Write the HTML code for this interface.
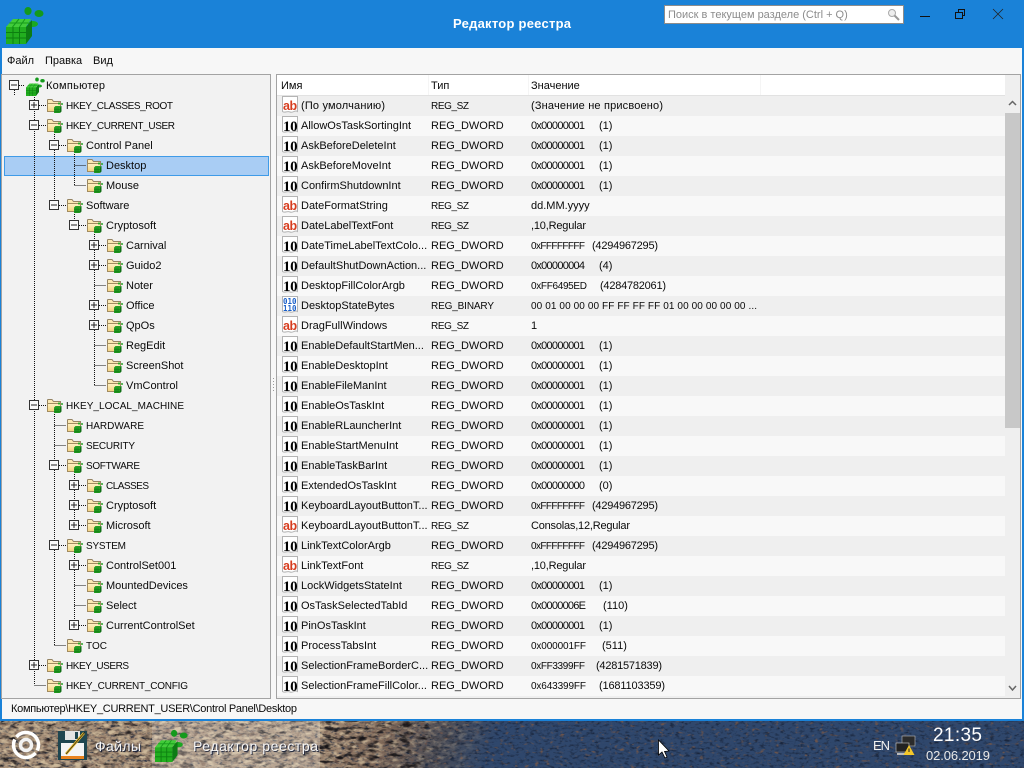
<!DOCTYPE html>
<html lang="ru"><head><meta charset="utf-8"><title>Редактор реестра</title>
<style>
html,body{margin:0;padding:0;width:1024px;height:768px;overflow:hidden;background:#33465f}
svg{display:block;position:absolute;left:0;top:0}
text{font-family:"Liberation Sans",sans-serif;font-size:11px;fill:#0a0a0a}
text.u{font-size:10px}
text.d{font-family:"Liberation Serif",serif;font-size:15px;font-weight:bold;fill:#000;letter-spacing:-.4px}
text.a{font-size:12.500px;font-weight:bold;fill:#d63c1e;letter-spacing:-.4px}
text.b{font-family:"DejaVu Sans Mono",monospace;font-size:7.500px;font-weight:bold;fill:#1a5fc8}
text.t{fill:#f6f6f6;font-size:14px;filter:drop-shadow(1px 1px 0 rgba(15,25,50,.8))}
.dot{stroke:#111;stroke-width:1;stroke-dasharray:1 1;fill:none;shape-rendering:crispEdges}
</style></head><body>
<svg width="1024" height="768" viewBox="0 0 1024 768" xmlns="http://www.w3.org/2000/svg">
<defs>
<linearGradient id="wp" gradientUnits="userSpaceOnUse" x1="320" y1="710" x2="480" y2="775">
<stop offset="0" stop-color="#a68f78"/><stop offset=".4" stop-color="#806a5a"/><stop offset=".72" stop-color="#4a4c56"/><stop offset="1" stop-color="#2f476c"/>
</linearGradient>
<linearGradient id="mg" gradientUnits="userSpaceOnUse" x1="320" y1="710" x2="480" y2="775">
<stop offset="0" stop-color="#fff"/><stop offset=".6" stop-color="#888"/><stop offset="1" stop-color="#000"/>
</linearGradient>
<mask id="mk" maskUnits="userSpaceOnUse" x="0" y="720" width="1024" height="48"><rect y="720" width="1024" height="48" fill="url(#mg)"/></mask>
<filter id="n" x="0" y="0" width="100%" height="100%" color-interpolation-filters="sRGB"><feTurbulence type="fractalNoise" baseFrequency=".09 .22" numOctaves="3" seed="7"/><feColorMatrix values="0 0 0 0 .09  0 0 0 0 .08  0 0 0 0 .09  2.4 2.4 0 0 -2.45"/></filter>
<filter id="n2" x="0" y="0" width="100%" height="100%" color-interpolation-filters="sRGB"><feTurbulence type="fractalNoise" baseFrequency=".12 .25" numOctaves="3" seed="21"/><feColorMatrix values="0 0 0 0 .8  0 0 0 0 .72  0 0 0 0 .6  2.6 2.6 0 0 -2.5"/></filter>
<filter id="n3" x="0" y="0" width="100%" height="100%" color-interpolation-filters="sRGB"><feTurbulence type="fractalNoise" baseFrequency=".14 .3" numOctaves="3" seed="33"/><feColorMatrix values="0 0 0 0 .45  0 0 0 0 .35  0 0 0 0 .29  2 2 0 0 -2.1"/></filter>
<filter id="n4" x="0" y="0" width="100%" height="100%" color-interpolation-filters="sRGB"><feTurbulence type="fractalNoise" baseFrequency=".2 .4" numOctaves="3" seed="5"/><feColorMatrix values="0 0 0 0 .1  0 0 0 0 .15  0 0 0 0 .24  2 2 0 0 -2"/></filter>
<filter id="n5" x="0" y="0" width="100%" height="100%" color-interpolation-filters="sRGB"><feTurbulence type="fractalNoise" baseFrequency=".2 .35" numOctaves="2" seed="13"/><feColorMatrix values="0 0 0 0 .42  0 0 0 0 .33  0 0 0 0 .3  2.6 2.6 0 0 -3"/></filter>
<linearGradient id="fd" x1="0" y1="0" x2="0" y2="1"><stop offset="0" stop-color="#fff2c6"/><stop offset="1" stop-color="#f5d27e"/></linearGradient>
<symbol id="f" viewBox="0 0 16 16" width="16" height="16">
<path d="M.5 3V14.500H13.500V4.500H6.500L5 2.500H1Z" fill="#fbe9b4" stroke="#958463"/>
<path d="M.5 14.500V6.500H13.500V14.500Z" fill="url(#fd)" stroke="#a28c60"/>
<path d="M7 10.500L8.500 9H14.500L13 10.500V16H7Z" fill="#27a025"/>
<path d="M13 10.500L14.500 9V14.500L13 16Z" fill="#0f6f14"/>
<path d="M7 12.500H13M7 14.500H13M9 10.500V16M11 10.500V16" stroke="#0f7a12" stroke-width=".6"/>
<circle cx="12" cy="6.500" r="1.100" fill="#2aa52a"/><circle cx="15" cy="7" r="1" fill="#2aa52a"/>
</symbol>
<symbol id="c" viewBox="6 6 38 38" width="38" height="38">
<ellipse cx="28" cy="11" rx="3.600" ry="4" fill="#149a1c"/><ellipse cx="39" cy="13.500" rx="4.500" ry="3.500" fill="#149a1c"/><ellipse cx="33" cy="24" rx="5" ry="3" fill="#1aa822"/>
<path d="M6 27L13 19H31L26 27Z" fill="#42cc3a"/>
<path d="M12.500 27L19 19M19.500 27L25 19M9.500 23H28.500" stroke="#159a1b" stroke-width="1"/>
<rect x="6" y="27" width="20" height="17" fill="#22ae1f"/>
<path d="M26 27L32 20V36L26 44Z" fill="#0d7c14"/>
<path d="M13 27V44M19.500 27V44M6 32.500H26M6 38H26" stroke="#0c7f10" stroke-width="1"/>
</symbol>
<symbol id="p" viewBox="0 0 16 18" width="16" height="18">
<path d="M.5 .5H15.500V15.500C13 13.500 11 17.500 8 16C5 14.500 3 17.500 .5 15.500Z" fill="#fff" stroke="#b4b4b4"/>
</symbol>
<symbol id="pl" viewBox="0 0 10 10" width="10" height="10"><rect x=".5" y=".5" width="9" height="9" fill="#fafafa" stroke="#333"/><path d="M2 5H8M5 2V8" stroke="#222"/></symbol>
<symbol id="mi" viewBox="0 0 10 10" width="10" height="10"><rect x=".5" y=".5" width="9" height="9" fill="#fafafa" stroke="#333"/><path d="M2 5H8" stroke="#222"/></symbol>
</defs>

<!-- wallpaper -->
<rect y="720" width="1024" height="48" fill="url(#wp)"/>
<rect y="720" width="1024" height="48" filter="url(#n4)"/>
<rect y="720" width="1024" height="48" filter="url(#n5)"/>
<g mask="url(#mk)"><rect y="720" width="1024" height="48" filter="url(#n3)"/><rect y="720" width="1024" height="48" filter="url(#n)"/><rect y="720" width="1024" height="48" filter="url(#n2)"/></g>
<rect x="320" y="720" width="110" height="48" filter="url(#n)"/>
<!-- window -->
<rect width="1024" height="721" fill="#1a82d8"/>
<rect x="2" y="48" width="1020" height="671" fill="#f7f7f7"/>
<use href="#c" x="6" y="6"/>
<text x="453" y="28" textLength="118" style="font-size:13px;font-weight:bold;fill:#fff">Редактор реестра</text>
<rect x="664.500" y="5.500" width="239" height="18" fill="#fff" stroke="#8c8c8c"/>
<text x="668" y="18" style="fill:#8c8c8c">Поиск в текущем разделе (Ctrl + Q)</text>
<circle cx="892" cy="13" r="3.500" fill="#eee" stroke="#aaa"/><path d="M894.500 15.500L899 20" stroke="#999" stroke-width="2"/>
<path d="M920 16.500H930" stroke="#111"/>
<path d="M955.500 12.500H962.500V18.500H955.500ZM958.500 12V9.500H964.500V15.500H963" fill="none" stroke="#111"/>
<path d="M993 9L1003 19M1003 9L993 19" stroke="#222" stroke-width=".8"/>
<text x="7" y="64">Файл</text><text x="45" y="64">Правка</text><text x="93" y="64">Вид</text>

<!-- tree panel -->
<rect x="1.500" y="74.500" width="269" height="624" fill="#f2f2f2" stroke="#a3a3a3"/>
<rect x="4.500" y="156.500" width="264" height="19" fill="#a9cdf4" stroke="#3f9be8"/>
<path class="dot" d="M14.500 90V95M19 85.500H25M34.500 95V685M39 105.500H46M39 125.500H46M39 405.500H46M39 665.500H46M34.500 685.500H46M54.500 130V205M59 145.500H66M59 205.500H66M74.500 150V185M74.500 165.500H86M74.500 185.500H86M74.500 210V225M79 225.500H86M94.500 230V385M99 245.500H106M99 265.500H106M94.500 285.500H106M99 305.500H106M99 325.500H106M94.500 345.500H106M94.500 365.500H106M94.500 385.500H106M54.500 410V645M54.500 425.500H66M54.500 445.500H66M59 465.500H66M59 545.500H66M54.500 645.500H66M74.500 470V525M79 485.500H86M79 505.500H86M79 525.500H86M74.500 550V625M79 565.500H86M74.500 585.500H86M74.500 605.500H86M79 625.500H86"/>
<use href="#mi" x="9" y="80"/>
<use href="#c" x="26" y="77" width="19" height="19"/><text x="46" y="89" textLength="59">Компьютер</text>
<use href="#pl" x="29" y="100"/><use href="#f" x="47" y="97"/><text class="u" x="66" y="109" textLength="107">HKEY_CLASSES_ROOT</text>
<use href="#mi" x="29" y="120"/><use href="#f" x="47" y="117"/><text class="u" x="66" y="129" textLength="109">HKEY_CURRENT_USER</text>
<use href="#mi" x="49" y="140"/><use href="#f" x="67" y="137"/><text x="86" y="149">Control Panel</text>
<use href="#f" x="87" y="157"/><text x="106" y="169">Desktop</text>
<use href="#f" x="87" y="177"/><text x="106" y="189">Mouse</text>
<use href="#mi" x="49" y="200"/><use href="#f" x="67" y="197"/><text x="86" y="209">Software</text>
<use href="#mi" x="69" y="220"/><use href="#f" x="87" y="217"/><text x="106" y="229">Cryptosoft</text>
<use href="#pl" x="89" y="240"/><use href="#f" x="107" y="237"/><text x="126" y="249">Carnival</text>
<use href="#pl" x="89" y="260"/><use href="#f" x="107" y="257"/><text x="126" y="269">Guido2</text>
<use href="#f" x="107" y="277"/><text x="126" y="289">Noter</text>
<use href="#pl" x="89" y="300"/><use href="#f" x="107" y="297"/><text x="126" y="309">Office</text>
<use href="#pl" x="89" y="320"/><use href="#f" x="107" y="317"/><text x="126" y="329">QpOs</text>
<use href="#f" x="107" y="337"/><text x="126" y="349">RegEdit</text>
<use href="#f" x="107" y="357"/><text x="126" y="369">ScreenShot</text>
<use href="#f" x="107" y="377"/><text x="126" y="389">VmControl</text>
<use href="#mi" x="29" y="400"/><use href="#f" x="47" y="397"/><text class="u" x="66" y="409" textLength="118">HKEY_LOCAL_MACHINE</text>
<use href="#f" x="67" y="417"/><text class="u" x="86" y="429" textLength="58">HARDWARE</text>
<use href="#f" x="67" y="437"/><text class="u" x="86" y="449" textLength="49">SECURITY</text>
<use href="#mi" x="49" y="460"/><use href="#f" x="67" y="457"/><text class="u" x="86" y="469" textLength="54">SOFTWARE</text>
<use href="#pl" x="69" y="480"/><use href="#f" x="87" y="477"/><text class="u" x="106" y="489" textLength="43">CLASSES</text>
<use href="#pl" x="69" y="500"/><use href="#f" x="87" y="497"/><text x="106" y="509">Cryptosoft</text>
<use href="#pl" x="69" y="520"/><use href="#f" x="87" y="517"/><text x="106" y="529">Microsoft</text>
<use href="#mi" x="49" y="540"/><use href="#f" x="67" y="537"/><text class="u" x="86" y="549" textLength="40">SYSTEM</text>
<use href="#pl" x="69" y="560"/><use href="#f" x="87" y="557"/><text x="106" y="569">ControlSet001</text>
<use href="#f" x="87" y="577"/><text x="106" y="589">MountedDevices</text>
<use href="#f" x="87" y="597"/><text x="106" y="609">Select</text>
<use href="#pl" x="69" y="620"/><use href="#f" x="87" y="617"/><text x="106" y="629">CurrentControlSet</text>
<use href="#f" x="67" y="637"/><text class="u" x="86" y="649" textLength="21">TOC</text>
<use href="#pl" x="29" y="660"/><use href="#f" x="47" y="657"/><text class="u" x="66" y="669" textLength="63">HKEY_USERS</text>
<use href="#f" x="47" y="677"/><text class="u" x="66" y="689" textLength="122">HKEY_CURRENT_CONFIG</text>

<!-- splitter -->
<path d="M273.500 378V392" stroke="#999" stroke-dasharray="1 2"/>

<!-- list panel -->
<rect x="276.500" y="74.500" width="744" height="624" fill="#efefef" stroke="#a3a3a3"/>
<rect x="277" y="75" width="728" height="20" fill="#fff"/>
<path d="M277 95.500H1005" stroke="#e2e2e2"/><path d="M428.500 75V95M528.500 75V95M760.500 75V95" stroke="#f5f5f5"/>
<text x="281" y="89">Имя</text><text x="431" y="89">Тип</text><text x="531" y="89">Значение</text>
<g fill="#f8f8f8"><rect x="277" y="116" width="728" height="20"/><rect x="277" y="156" width="728" height="20"/><rect x="277" y="196" width="728" height="20"/><rect x="277" y="236" width="728" height="20"/><rect x="277" y="276" width="728" height="20"/><rect x="277" y="316" width="728" height="20"/><rect x="277" y="356" width="728" height="20"/><rect x="277" y="396" width="728" height="20"/><rect x="277" y="436" width="728" height="20"/><rect x="277" y="476" width="728" height="20"/><rect x="277" y="516" width="728" height="20"/><rect x="277" y="556" width="728" height="20"/><rect x="277" y="596" width="728" height="20"/><rect x="277" y="636" width="728" height="20"/><rect x="277" y="676" width="728" height="20"/></g>
<rect x="1005" y="113" width="15" height="315" fill="#c8c8c8"/>
<path d="M1009 105L1012.500 101.500L1016 105M1009 686L1012.500 690L1016 686" fill="none" stroke="#666" stroke-width="1.500"/>

<use href="#p" x="282" y="96"/><text class="a" x="283" y="110">ab</text><text x="301" y="109" textLength="84">(По умолчанию)</text><text class="u" x="431" y="109" textLength="38">REG_SZ</text><text x="531" y="109" textLength="132">(Значение не присвоено)</text>
<use href="#p" x="282" y="116"/><text class="d" x="283" y="131">10</text><text x="301" y="129">AllowOsTaskSortingInt</text><text x="431" y="129">REG_DWORD</text><text x="531" y="129" textLength="54">0x00000001</text><text x="599" y="129">(1)</text>
<use href="#p" x="282" y="136"/><text class="d" x="283" y="151">10</text><text x="301" y="149">AskBeforeDeleteInt</text><text x="431" y="149">REG_DWORD</text><text x="531" y="149" textLength="54">0x00000001</text><text x="599" y="149">(1)</text>
<use href="#p" x="282" y="156"/><text class="d" x="283" y="171">10</text><text x="301" y="169">AskBeforeMoveInt</text><text x="431" y="169">REG_DWORD</text><text x="531" y="169" textLength="54">0x00000001</text><text x="599" y="169">(1)</text>
<use href="#p" x="282" y="176"/><text class="d" x="283" y="191">10</text><text x="301" y="189">ConfirmShutdownInt</text><text x="431" y="189">REG_DWORD</text><text x="531" y="189" textLength="54">0x00000001</text><text x="599" y="189">(1)</text>
<use href="#p" x="282" y="196"/><text class="a" x="283" y="210">ab</text><text x="301" y="209">DateFormatString</text><text class="u" x="431" y="209" textLength="38">REG_SZ</text><text x="531" y="209">dd.MM.yyyy</text>
<use href="#p" x="282" y="216"/><text class="a" x="283" y="230">ab</text><text x="301" y="229">DateLabelTextFont</text><text class="u" x="431" y="229" textLength="38">REG_SZ</text><text x="531" y="229" textLength="55">,10,Regular</text>
<use href="#p" x="282" y="236"/><text class="d" x="283" y="251">10</text><text x="301" y="249">DateTimeLabelTextColo...</text><text x="431" y="249">REG_DWORD</text><text class="u" x="531" y="249" textLength="54">0xFFFFFFFF</text><text x="592" y="249" textLength="66">(4294967295)</text>
<use href="#p" x="282" y="256"/><text class="d" x="283" y="271">10</text><text x="301" y="269">DefaultShutDownAction...</text><text x="431" y="269">REG_DWORD</text><text x="531" y="269" textLength="54">0x00000004</text><text x="599" y="269">(4)</text>
<use href="#p" x="282" y="276"/><text class="d" x="283" y="291">10</text><text x="301" y="289">DesktopFillColorArgb</text><text x="431" y="289">REG_DWORD</text><text class="u" x="531" y="289" textLength="56">0xFF6495ED</text><text x="600" y="289" textLength="66">(4284782061)</text>
<use href="#p" x="282" y="296"/><text class="b" x="283" y="304">010</text><text class="b" x="283" y="311">110</text><text x="301" y="309">DesktopStateBytes</text><text class="u" x="431" y="309" textLength="63">REG_BINARY</text><text class="u" x="531" y="309" textLength="226">00 01 00 00 00 FF FF FF FF 01 00 00 00 00 00 ...</text>
<use href="#p" x="282" y="316"/><text class="a" x="283" y="330">ab</text><text x="301" y="329">DragFullWindows</text><text class="u" x="431" y="329" textLength="38">REG_SZ</text><text x="531" y="329">1</text>
<use href="#p" x="282" y="336"/><text class="d" x="283" y="351">10</text><text x="301" y="349">EnableDefaultStartMen...</text><text x="431" y="349">REG_DWORD</text><text x="531" y="349" textLength="54">0x00000001</text><text x="599" y="349">(1)</text>
<use href="#p" x="282" y="356"/><text class="d" x="283" y="371">10</text><text x="301" y="369">EnableDesktopInt</text><text x="431" y="369">REG_DWORD</text><text x="531" y="369" textLength="54">0x00000001</text><text x="599" y="369">(1)</text>
<use href="#p" x="282" y="376"/><text class="d" x="283" y="391">10</text><text x="301" y="389">EnableFileManInt</text><text x="431" y="389">REG_DWORD</text><text x="531" y="389" textLength="54">0x00000001</text><text x="599" y="389">(1)</text>
<use href="#p" x="282" y="396"/><text class="d" x="283" y="411">10</text><text x="301" y="409">EnableOsTaskInt</text><text x="431" y="409">REG_DWORD</text><text x="531" y="409" textLength="54">0x00000001</text><text x="599" y="409">(1)</text>
<use href="#p" x="282" y="416"/><text class="d" x="283" y="431">10</text><text x="301" y="429">EnableRLauncherInt</text><text x="431" y="429">REG_DWORD</text><text x="531" y="429" textLength="54">0x00000001</text><text x="599" y="429">(1)</text>
<use href="#p" x="282" y="436"/><text class="d" x="283" y="451">10</text><text x="301" y="449">EnableStartMenuInt</text><text x="431" y="449">REG_DWORD</text><text x="531" y="449" textLength="54">0x00000001</text><text x="599" y="449">(1)</text>
<use href="#p" x="282" y="456"/><text class="d" x="283" y="471">10</text><text x="301" y="469">EnableTaskBarInt</text><text x="431" y="469">REG_DWORD</text><text x="531" y="469" textLength="54">0x00000001</text><text x="599" y="469">(1)</text>
<use href="#p" x="282" y="476"/><text class="d" x="283" y="491">10</text><text x="301" y="489">ExtendedOsTaskInt</text><text x="431" y="489">REG_DWORD</text><text x="531" y="489" textLength="54">0x00000000</text><text x="599" y="489">(0)</text>
<use href="#p" x="282" y="496"/><text class="d" x="283" y="511">10</text><text x="301" y="509">KeyboardLayoutButtonT...</text><text x="431" y="509">REG_DWORD</text><text class="u" x="531" y="509" textLength="54">0xFFFFFFFF</text><text x="592" y="509" textLength="66">(4294967295)</text>
<use href="#p" x="282" y="516"/><text class="a" x="283" y="530">ab</text><text x="301" y="529">KeyboardLayoutButtonT...</text><text class="u" x="431" y="529" textLength="38">REG_SZ</text><text x="531" y="529" textLength="99">Consolas,12,Regular</text>
<use href="#p" x="282" y="536"/><text class="d" x="283" y="551">10</text><text x="301" y="549">LinkTextColorArgb</text><text x="431" y="549">REG_DWORD</text><text class="u" x="531" y="549" textLength="54">0xFFFFFFFF</text><text x="592" y="549" textLength="66">(4294967295)</text>
<use href="#p" x="282" y="556"/><text class="a" x="283" y="570">ab</text><text x="301" y="569">LinkTextFont</text><text class="u" x="431" y="569" textLength="38">REG_SZ</text><text x="531" y="569" textLength="55">,10,Regular</text>
<use href="#p" x="282" y="576"/><text class="d" x="283" y="591">10</text><text x="301" y="589">LockWidgetsStateInt</text><text x="431" y="589">REG_DWORD</text><text x="531" y="589" textLength="54">0x00000001</text><text x="599" y="589">(1)</text>
<use href="#p" x="282" y="596"/><text class="d" x="283" y="611">10</text><text x="301" y="609">OsTaskSelectedTabId</text><text x="431" y="609">REG_DWORD</text><text x="531" y="609" textLength="55">0x0000006E</text><text x="603" y="609">(110)</text>
<use href="#p" x="282" y="616"/><text class="d" x="283" y="631">10</text><text x="301" y="629">PinOsTaskInt</text><text x="431" y="629">REG_DWORD</text><text x="531" y="629" textLength="54">0x00000001</text><text x="599" y="629">(1)</text>
<use href="#p" x="282" y="636"/><text class="d" x="283" y="651">10</text><text x="301" y="649">ProcessTabsInt</text><text x="431" y="649">REG_DWORD</text><text class="u" x="531" y="649" textLength="55">0x000001FF</text><text x="602" y="649">(511)</text>
<use href="#p" x="282" y="656"/><text class="d" x="283" y="671">10</text><text x="301" y="669">SelectionFrameBorderC...</text><text x="431" y="669">REG_DWORD</text><text class="u" x="531" y="669" textLength="54">0xFF3399FF</text><text x="596" y="669" textLength="66">(4281571839)</text>
<use href="#p" x="282" y="676"/><text class="d" x="283" y="691">10</text><text x="301" y="689">SelectionFrameFillColor...</text><text x="431" y="689">REG_DWORD</text><text class="u" x="531" y="689" textLength="55">0x643399FF</text><text x="599" y="689" textLength="66">(1681103359)</text>

<text x="11" y="712" textLength="286">Компьютер\HKEY_CURRENT_USER\Control Panel\Desktop</text>

<!-- taskbar -->
<rect x="152" y="721" width="168" height="47" fill="#fff" opacity=".2"/>
<circle cx="26" cy="745" r="12.500" fill="none" stroke="#fff" stroke-width="3.500" stroke-dasharray="36 3 36 3.500" transform="rotate(40 26 745)"/>
<circle cx="26" cy="745" r="5.500" fill="none" stroke="#f2f2f2" stroke-width="3.500"/>
<rect x="58" y="731" width="29" height="29" fill="#1f4650"/>
<rect x="65" y="731" width="15" height="9" fill="#e4e4e4"/><rect x="75" y="732" width="3" height="7" fill="#1f4650"/>
<rect x="61" y="743" width="23" height="14" fill="#f4f4f4"/><rect x="61" y="756" width="23" height="3" fill="#e8821e"/>
<path d="M66 754L84 733" stroke="#e9b824" stroke-width="2.500"/><path d="M66 754L85 732" stroke="#222" stroke-width=".7"/>
<text class="t" x="95" y="751" textLength="46">Файлы</text>
<use href="#c" x="155" y="729" width="33" height="33"/>
<text class="t" x="193" y="751" textLength="125">Редактор реестра</text>
<text x="873" y="750" textLength="17" style="fill:#f2f2f2;font-size:13px">EN</text>
<rect x="902" y="736" width="13" height="10" fill="#2b2b2b" stroke="#bbb" stroke-width=".6"/>
<rect x="896" y="743" width="13" height="9" fill="#222" stroke="#ccc" stroke-width=".6"/><rect x="897" y="753" width="12" height="2" fill="#bbb"/>
<path d="M909 745L914.500 755H903.500Z" fill="#f4c82a"/><path d="M909 748.500V752" stroke="#222"/>
<text x="933" y="741" textLength="49" style="fill:#fff;font-size:19px">21:35</text>
<text x="926" y="760" textLength="64" style="fill:#e8e8e8;font-size:13px">02.06.2019</text>
<path d="M658.500 740V755L662 752L665 758L667 757L664.500 751.500L669 751Z" fill="#fff" stroke="#000" stroke-width=".8"/>
</svg>
</body></html>
